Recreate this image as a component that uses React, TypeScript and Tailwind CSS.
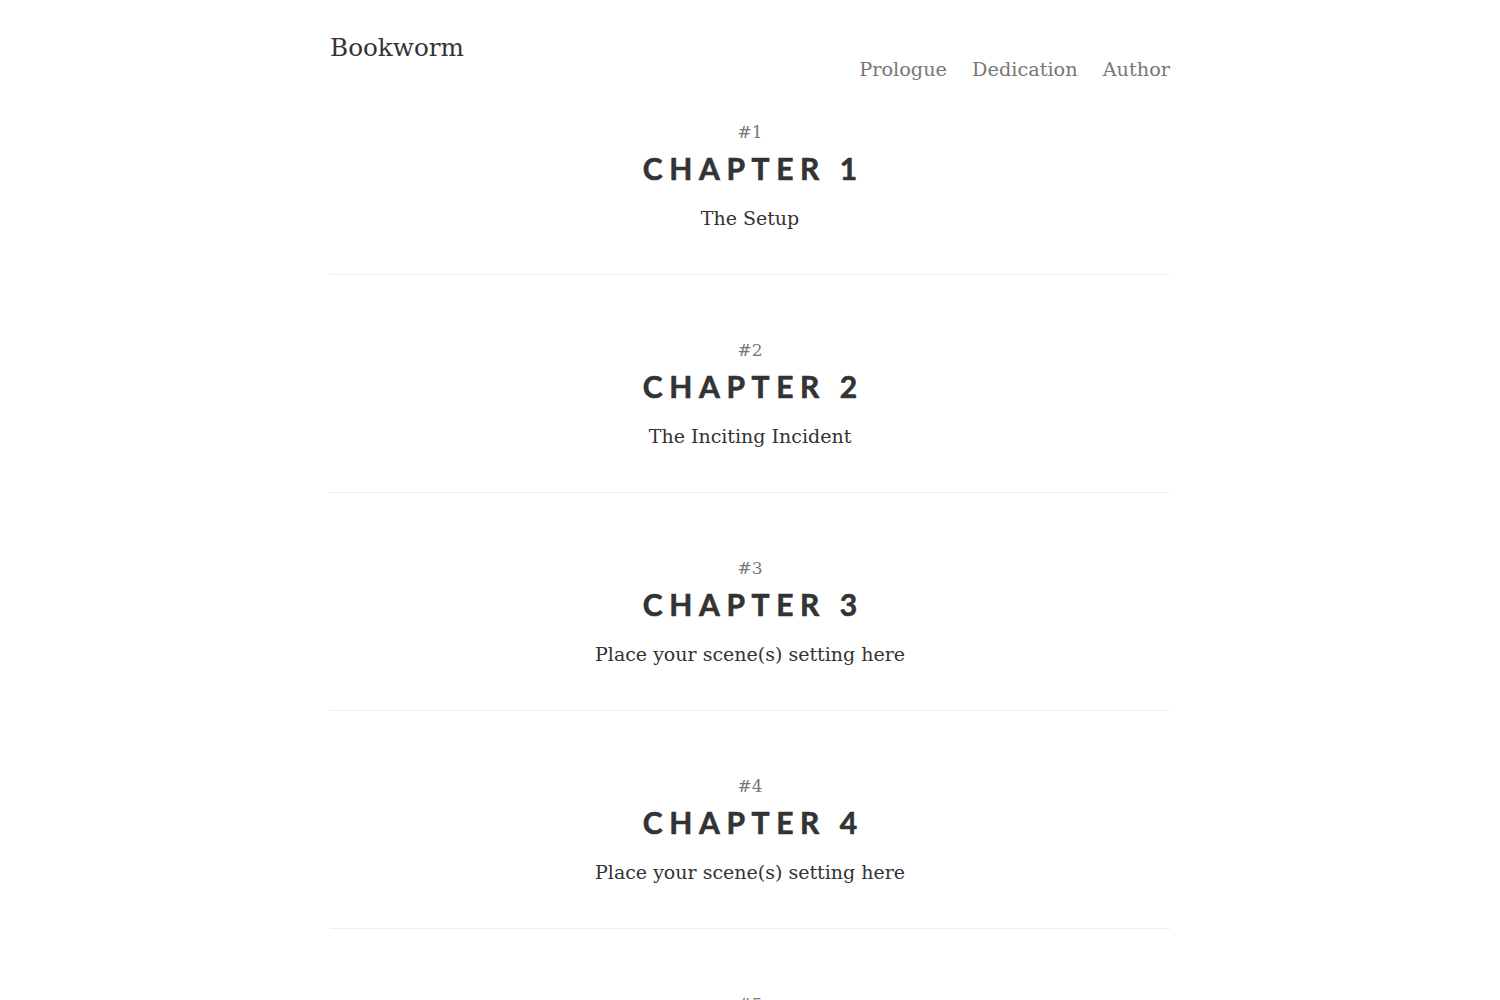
const chapters = [
  { n: 1, title: "The Setup" },
  { n: 2, title: "The Inciting Incident" },
  { n: 3, title: "Place your scene(s) setting here" },
  { n: 4, title: "Place your scene(s) setting here" },
  { n: 5, title: "Place your scene(s) setting here" },
];

const serif = { fontFamily: '"DejaVu Serif", "Liberation Serif", serif' };

export default function App() {
  return (
    <div className="min-h-screen bg-white text-[#333]" style={serif}>
      <div className="mx-auto w-[840px]">
        <header className="flex items-start justify-between pt-[30px]">
          <a className="text-[24.7px] leading-[36px] text-[#333]">Bookworm</a>
          <nav className="mt-[25px] flex gap-[25px] text-[19.3px] leading-[30px] text-[#777]">
            <a>Prologue</a>
            <a>Dedication</a>
            <a>Author</a>
          </nav>
        </header>

        <main className="mt-[-28px]">
          {chapters.map((c) => (
            <section
              key={c.n}
              className="flex flex-col items-center border-b border-[#eeeeee] pt-[63px] pb-[41px] text-center"
            >
              <span className="text-[17px] leading-[24px] text-[#777]">#{c.n}</span>
              <h2
                className="mt-[4px] text-[30px] leading-[40px] font-bold tracking-[0.22em] text-[#333] [-webkit-text-stroke:0.6px_#333]"
                style={{ fontFamily: 'Lato, "Liberation Sans", sans-serif', marginRight: "-0.22em" }}
              >
                CHAPTER {c.n}
              </h2>
              <p className="mt-[15px] text-[19px] leading-[30px] text-[#333]">{c.title}</p>
            </section>
          ))}
        </main>
      </div>
    </div>
  );
}
